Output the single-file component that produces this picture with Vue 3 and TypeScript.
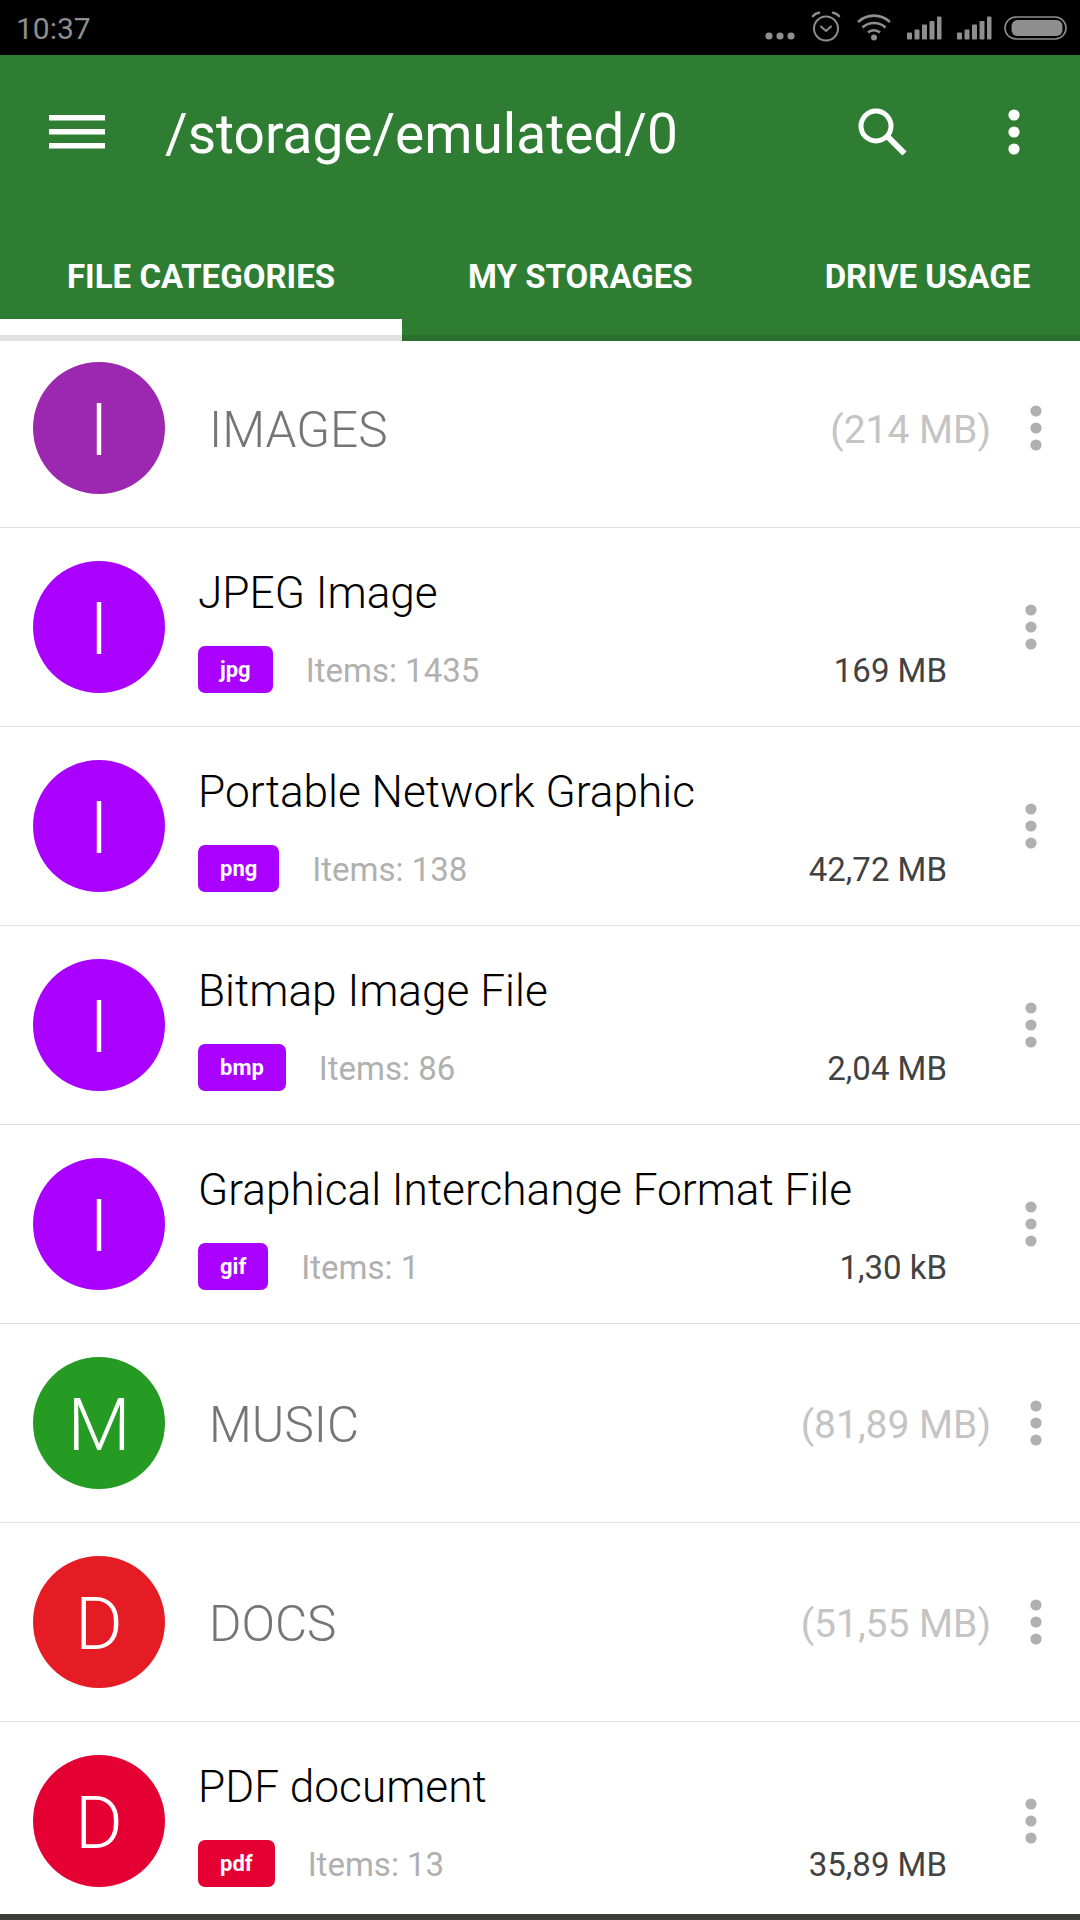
<template>
  <div class="screen">
    <div class="status-bar">
      <span class="clock">10:37</span>
      <svg class="status-icons" width="310" height="40" viewBox="0 0 310 40" fill="none">
        <g fill="#8e8e8e">
          <circle cx="9" cy="28" r="3.6" />
          <circle cx="20" cy="28" r="3.6" />
          <circle cx="31" cy="28" r="3.6" />
        </g>
        <g stroke="#8e8e8e" stroke-width="2" stroke-linecap="round">
          <circle cx="66" cy="20.500" r="12" />
          <path d="M61 18.500l5 4.500 5-4.500" />
          <path d="M53 8c1.500-1.800 3.500-2.800 6-3.200M79 8c-1.500-1.800-3.500-2.800-6-3.200" stroke-width="2.600" />
        </g>
        <g stroke="#8e8e8e" stroke-width="2.600" fill="none">
          <path d="M98 14c9-8.500 23-8.500 32 0" />
          <path d="M102.500 19.500c6.500-6 16.500-6 23 0" />
          <path d="M108 24.500c3.400-3 8.600-3 12 0" />
        </g>
        <circle cx="114" cy="29.500" r="3" fill="#8e8e8e" />
        <g fill="#8e8e8e">
          <rect x="147" y="24.500" width="5" height="7" rx="1" />
          <rect x="154.500" y="21.500" width="5" height="10" rx="1" />
          <rect x="162" y="16.500" width="5" height="15" rx="1" />
          <rect x="169.500" y="13" width="5" height="18.500" rx="1" />
          <rect x="177" y="8.500" width="4.500" height="23" rx="1" />
          <rect x="197" y="24.500" width="5" height="7" rx="1" />
          <rect x="204.500" y="21.500" width="5" height="10" rx="1" />
          <rect x="212" y="16.500" width="5" height="15" rx="1" />
          <rect x="219.500" y="13" width="5" height="18.500" rx="1" />
          <rect x="227" y="8.500" width="4.500" height="23" rx="1" />
        </g>
        <rect x="245" y="9" width="61" height="22" rx="11" stroke="#8e8e8e" stroke-width="1.600" />
        <rect x="251.500" y="12" width="51" height="16" rx="6" fill="#8e8e8e" />
      </svg>
    </div>

    <header class="app-header">
      <div class="toolbar">
        <svg class="menu-icon" width="56" height="34" viewBox="0 0 56 34">
          <rect y="0" width="56" height="5.500" fill="#fff" />
          <rect y="14" width="56" height="5.500" fill="#fff" />
          <rect y="28" width="56" height="5.500" fill="#fff" />
        </svg>
        <span class="path-title">/storage/emulated/0</span>
        <svg class="search-icon" width="52" height="52" viewBox="0 0 52 52" fill="none" stroke="#fff">
          <circle cx="19" cy="19" r="15" stroke-width="5" />
          <path d="M30 29l17.500 17.500" stroke-width="6" />
        </svg>
        <svg class="more-icon" width="12" height="46" viewBox="0 0 12 46" fill="#fff">
          <circle cx="6" cy="6" r="5.600" />
          <circle cx="6" cy="23" r="5.600" />
          <circle cx="6" cy="40" r="5.600" />
        </svg>
      </div>
      <nav class="tabs">
        <div v-for="(tab, i) in tabs" :key="tab" class="tab" :class="{ active: i === 0 }">{{ tab }}</div>
      </nav>
    </header>

    <main class="list">
      <div v-for="row in rows" :key="row.title" class="row">
        <div class="avatar" :style="{ background: row.color }"><span>{{ row.letter }}</span></div>
        <template v-if="row.ext">
          <div class="item-body">
            <div class="item-title">{{ row.title }}</div>
            <div class="item-meta">
              <span class="badge" :style="{ background: row.color }">{{ row.ext }}</span>
              <span class="count">Items: {{ row.count }}</span>
              <span class="size">{{ row.size }}</span>
            </div>
          </div>
          <svg class="row-more item-more" width="12" height="46" viewBox="0 0 12 46" fill="#b0b0b0">
            <circle cx="6" cy="6" r="5.600" />
            <circle cx="6" cy="23" r="5.600" />
            <circle cx="6" cy="40" r="5.600" />
          </svg>
        </template>
        <template v-else>
          <div class="cat-title">{{ row.title }}</div>
          <div class="cat-size">({{ row.size }})</div>
          <svg class="row-more cat-more" width="12" height="46" viewBox="0 0 12 46" fill="#b0b0b0">
            <circle cx="6" cy="6" r="5.600" />
            <circle cx="6" cy="23" r="5.600" />
            <circle cx="6" cy="40" r="5.600" />
          </svg>
        </template>
      </div>
    </main>
    <div class="bottom-edge"></div>
  </div>
</template>

<script setup lang="ts">
interface Row {
  title: string
  letter: string
  color: string
  size: string
  ext?: string
  count?: number
}

const tabs = ['FILE CATEGORIES', 'MY STORAGES', 'DRIVE USAGE']

const rows: Row[] = [
  { title: 'IMAGES', letter: 'I', color: '#9c27b0', size: '214 MB' },
  { title: 'JPEG Image', letter: 'I', color: '#aa00ff', size: '169 MB', ext: 'jpg', count: 1435 },
  { title: 'Portable Network Graphic', letter: 'I', color: '#aa00ff', size: '42,72 MB', ext: 'png', count: 138 },
  { title: 'Bitmap Image File', letter: 'I', color: '#aa00ff', size: '2,04 MB', ext: 'bmp', count: 86 },
  { title: 'Graphical Interchange Format File', letter: 'I', color: '#aa00ff', size: '1,30 kB', ext: 'gif', count: 1 },
  { title: 'MUSIC', letter: 'M', color: '#259b24', size: '81,89 MB' },
  { title: 'DOCS', letter: 'D', color: '#e51c23', size: '51,55 MB' },
  { title: 'PDF document', letter: 'D', color: '#e40033', size: '35,89 MB', ext: 'pdf', count: 13 }
]
</script>

<style>
html,
body {
  margin: 0;
  background: #fff;
}
</style>

<style scoped>
.screen {
  width: 1080px;
  height: 1920px;
  overflow: hidden;
  position: relative;
  font-family: Roboto, "Liberation Sans", sans-serif;
  background: #fff;
}

.status-bar {
  height: 55px;
  background: #000;
  display: flex;
  align-items: center;
  justify-content: space-between;
  padding-left: 16px;
  padding-right: 10px;
}
.clock {
  font-size: 30px;
  color: #8e8e8e;
  margin-top: 1px;
}

.app-header {
  position: relative;
  z-index: 2;
  background: #2e7d32;
  height: 286px;
}
.toolbar {
  height: 154px;
  display: flex;
  align-items: center;
  padding-left: 49px;
  padding-right: 60px;
}
.path-title {
  margin-left: 60px;
  margin-top: 3px;
  flex: 1;
  font-size: 55px;
  color: #fff;
}
.search-icon {
  margin-top: 2px;
}
.more-icon {
  margin-left: 99px;
}

.tabs {
  display: flex;
  height: 132px;
  overflow: hidden;
}
.tab {
  flex: none;
  height: 132px;
  box-sizing: border-box;
  padding: 48px 66px 0;
  font-size: 33px;
  font-weight: 700;
  line-height: 40px;
  color: #fff;
  border-bottom: 6px solid #2a6f2e;
}
.tab.active {
  padding: 48px 67px 0;
  border-bottom-color: #e0e0e0;
  box-shadow: inset 0 -16px 0 #fff;
}

.list {
  margin-top: -12px;
}
.row {
  height: 199px;
  box-sizing: border-box;
  border-bottom: 1px solid #e0e0e0;
  display: flex;
  align-items: center;
  padding-left: 33px;
}
.avatar {
  flex: none;
  width: 132px;
  height: 132px;
  border-radius: 50%;
  display: flex;
  align-items: center;
  justify-content: center;
  color: #fff;
  font-size: 73px;
  font-weight: 300;
}
.avatar span {
  margin-top: 3px;
}

.cat-title {
  margin-left: 44px;
  margin-top: 3px;
  flex: 1;
  font-size: 49.5px;
  font-weight: 300;
  color: #757575;
}
.cat-size {
  margin-top: 3px;
  font-size: 39px;
  font-weight: 400;
  color: #c4c4c4;
}
.cat-more {
  margin-left: 39px;
  margin-right: 38px;
}

.item-body {
  flex: 1;
  margin-left: 33px;
  align-self: stretch;
  display: flex;
  flex-direction: column;
}
.item-title {
  margin-top: 39px;
  font-size: 44.2px;
  line-height: 52px;
  font-weight: 300;
  color: #000;
}
.item-meta {
  margin-top: 27px;
  display: flex;
  align-items: center;
}
.badge {
  height: 47px;
  padding: 0 22px;
  border-radius: 7px;
  color: #fff;
  font-size: 22px;
  font-weight: 700;
  display: flex;
  align-items: center;
}
.count {
  margin-left: 33px;
  margin-top: 2px;
  flex: 1;
  font-size: 33px;
  font-weight: 400;
  color: #b0b0b0;
}
.size {
  margin-top: 1px;
  font-size: 33px;
  color: #424242;
  margin-right: 78px;
}
.item-more {
  margin-right: 43px;
}

.bottom-edge {
  position: absolute;
  left: 0;
  right: 0;
  bottom: 0;
  height: 6px;
  background: #3c3d3a;
}
</style>
